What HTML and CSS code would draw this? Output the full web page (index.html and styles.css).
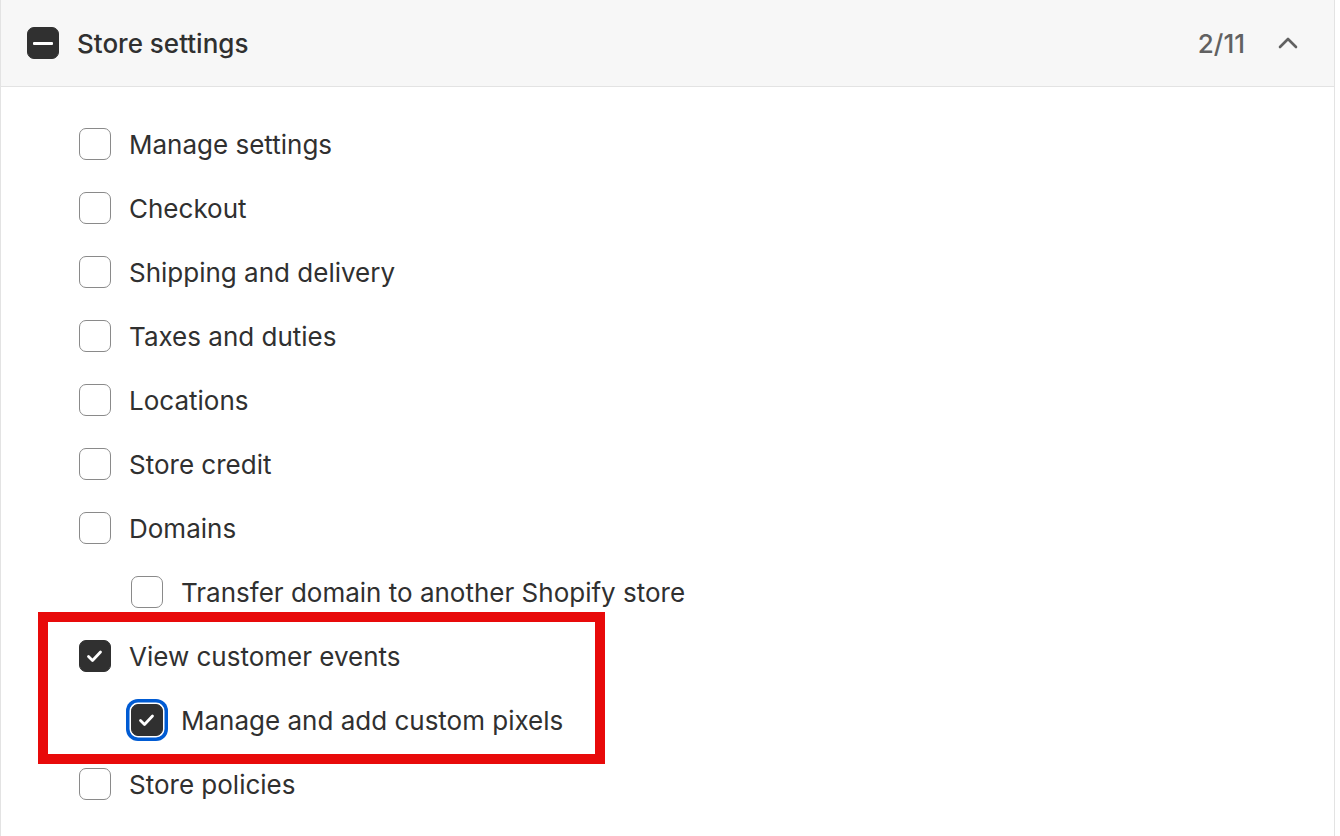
FILE: index.html
```html
<!DOCTYPE html>
<html>
<head>
<meta charset="utf-8">
<link rel="stylesheet" href="styles.css">
</head>
<body>
<div class="card">
  <div class="header">
    <span class="box box-filled box-minus"><span class="minus"></span></span>
    <span class="title">Store settings</span>
    <span class="count">2/11</span>
    <svg class="chev" width="22" height="14" viewBox="0 0 22 14"><polyline points="3,11 11,3 19,11" fill="none" stroke="#616161" stroke-width="2.6" stroke-linecap="round" stroke-linejoin="round"/></svg>
  </div>
  <div class="list">
    <div class="row"><span class="box"></span><span class="label">Manage settings</span></div>
    <div class="row"><span class="box"></span><span class="label">Checkout</span></div>
    <div class="row"><span class="box"></span><span class="label">Shipping and delivery</span></div>
    <div class="row"><span class="box"></span><span class="label">Taxes and duties</span></div>
    <div class="row"><span class="box"></span><span class="label">Locations</span></div>
    <div class="row"><span class="box"></span><span class="label">Store credit</span></div>
    <div class="row"><span class="box"></span><span class="label">Domains</span></div>
    <div class="row nested"><span class="box"></span><span class="label">Transfer domain to another Shopify store</span></div>
    <div class="row"><span class="box box-filled"><svg class="check" width="24" height="24" viewBox="0 0 24 24"><polyline points="5.5,12.5 9.5,16.5 17.5,8" fill="none" stroke="#ffffff" stroke-width="2.8" stroke-linecap="round" stroke-linejoin="round"/></svg></span><span class="label">View customer events</span></div>
    <div class="row nested"><span class="box box-filled focus"><svg class="check" width="24" height="24" viewBox="0 0 24 24"><polyline points="5.5,12.5 9.5,16.5 17.5,8" fill="none" stroke="#ffffff" stroke-width="2.8" stroke-linecap="round" stroke-linejoin="round"/></svg></span><span class="label">Manage and add custom pixels</span></div>
    <div class="row"><span class="box"></span><span class="label">Store policies</span></div>
    <div class="highlight"></div>
  </div>
</div>
</body>
</html>
```

FILE: styles.css
```css
html, body {
  margin: 0;
  padding: 0;
  background: #ffffff;
}
body {
  font-family: Inter, "Noto Sans", "Liberation Sans", sans-serif;
  color: #303030;
  width: 1340px;
  height: 836px;
  overflow: hidden;
}
.card {
  box-sizing: border-box;
  width: 1335px;
  height: 836px;
  border-left: 1px solid #e3e3e3;
  border-right: 1px solid #e3e3e3;
  background: #fff;
  overflow: hidden;
}
.header {
  height: 86px;
  background: #f7f7f7;
  border-bottom: 1px solid #e3e3e3;
  display: flex;
  align-items: center;
  padding: 0 35px 0 26px;
}
.title {
  margin-left: 18px;
  font-size: 26px;
  font-weight: 550;
  flex: 1;
}
.count {
  font-size: 26px;
  font-weight: 450;
  color: #616161;
  margin-right: 32px;
}
.chev {
  display: block;
}
.list {
  position: relative;
  padding: 25px 0 0 78px;
}
.row {
  height: 64px;
  display: flex;
  align-items: center;
  gap: 18px;
}
.row.nested {
  padding-left: 52px;
}
.label {
  font-size: 26px;
  font-weight: 400;
}
.box {
  box-sizing: border-box;
  width: 32px;
  height: 32px;
  flex: none;
  border: 1.5px solid #8a8a8a;
  border-radius: 7px;
  background: #fff;
  display: flex;
  align-items: center;
  justify-content: center;
}
.box-filled {
  background: #303030;
  border-color: #303030;
}
.check {
  display: block;
  flex: none;
  width: 24px;
  height: 24px;
}
.minus {
  width: 20px;
  height: 3px;
  background: #fff;
  border-radius: 1px;
}
.focus {
  box-shadow: 0 0 0 1.5px #ffffff, 0 0 0 5px #005bd3;
}
.highlight {
  position: absolute;
  left: 37px;
  top: 525px;
  width: 547px;
  height: 132px;
  border: 10px solid #e80a0a;
  pointer-events: none;
}
```
